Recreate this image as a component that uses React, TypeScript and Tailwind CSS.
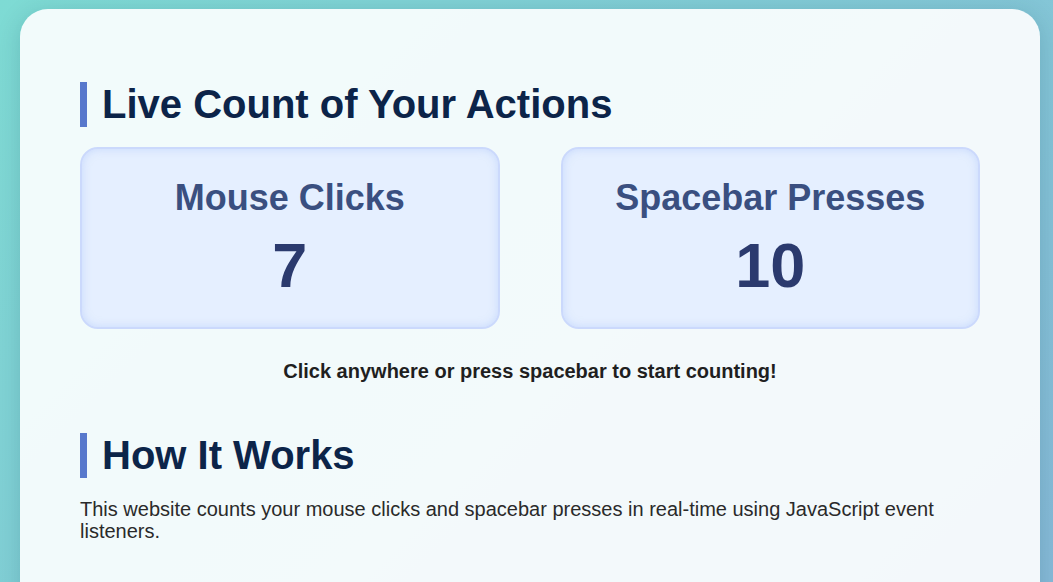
import React from 'react';

const stats = [
  { label: 'Mouse Clicks', value: 7 },
  { label: 'Spacebar Presses', value: 10 },
];

export default function App() {
  return (
    <div className="h-[582px] overflow-hidden bg-[linear-gradient(135deg,#7edbd4,#87bad8)] pl-[20px] pr-[13px] pt-[9px] font-['Liberation_Sans',Arial,sans-serif] text-[20px] leading-[normal]">
      <div className="min-h-[620px] rounded-[28px] bg-white/90 px-[60px] pt-[73px] pb-[60px] shadow-[0_4px_24px_rgba(0,60,80,0.18)]">
        {/* Live counters */}
        <h2 className="border-l-[7px] border-[#5878cc] pl-[15px] text-[40px] leading-[45px] font-bold text-[#0c2449]">
          Live Count of Your Actions
        </h2>
        <div className="mt-[20px] grid grid-cols-2 gap-[61px]">
          {stats.map((s) => (
            <div
              key={s.label}
              className="h-[182px] rounded-[18px] border-2 border-[#cbd9fc] bg-[#e5efff] pt-[28px] text-center shadow-[inset_0_0_8px_rgba(170,195,250,0.5)]"
            >
              <div className="text-[36px] font-bold text-[#3a4f80]">{s.label}</div>
              <div className="mt-[10px] text-[63px] font-bold text-[#2b3a6e]">{s.value}</div>
            </div>
          ))}
        </div>
        <p className="mt-[31px] text-center font-bold text-[#1f1f1f]">
          Click anywhere or press spacebar to start counting!
        </p>

        {/* About */}
        <h2 className="mt-[50px] border-l-[7px] border-[#5878cc] pl-[15px] text-[40px] leading-[45px] font-bold text-[#0c2449]">
          How It Works
        </h2>
        <p className="mt-[20px] leading-[22px] text-[#2a2a2a]">
          This website counts your mouse clicks and spacebar presses in real-time using JavaScript event listeners.
        </p>
      </div>
    </div>
  );
}
